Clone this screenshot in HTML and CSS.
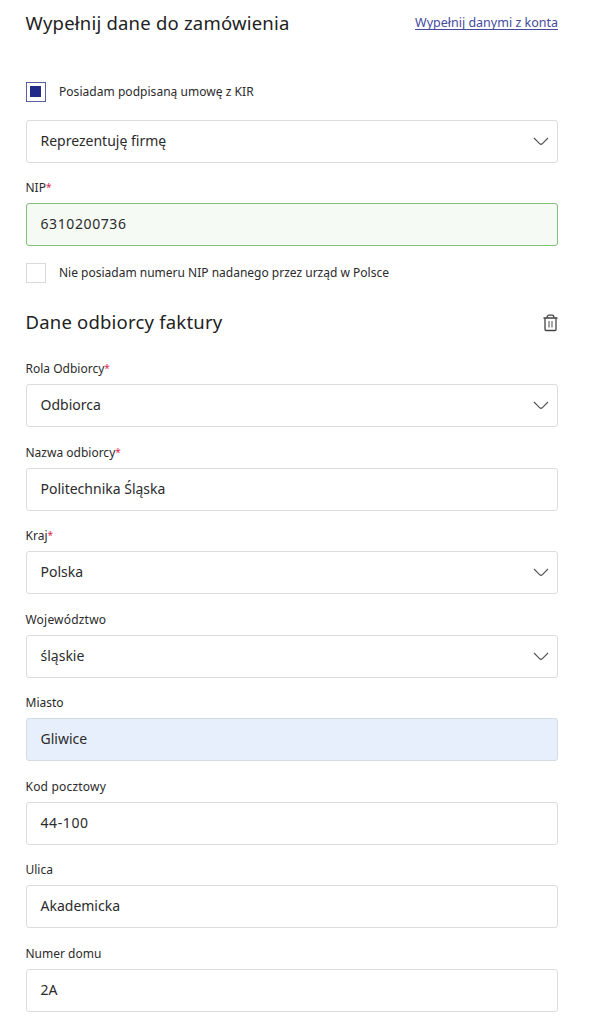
FILE: index.html
```html
<!DOCTYPE html>
<html lang="pl">
<head>
<meta charset="utf-8">
<title>Dane do zamówienia</title>
<link rel="stylesheet" href="styles.css">
</head>
<body>
<main class="form">
  <header class="form-header">
    <h1 class="title title-main">Wypełnij dane do zamówienia</h1>
    <a class="fill-link" href="#">Wypełnij danymi z konta</a>
  </header>
  <div class="check check-contract"><span class="checkbox checked"></span><span class="check-text">Posiadam podpisaną umowę z KIR</span></div>
  <div class="box"><span class="value">Reprezentuję firmę</span><svg class="chevron" viewBox="0 0 16 9"><path d="M1 1 6.8 6.8Q8 7.9 9.2 6.8L15 1"/></svg></div>
  <div class="field field-nip"><div class="label">NIP<span class="req">*</span></div><div class="box valid"><span class="value digits">6310200736</span></div></div>
  <div class="check check-nip"><span class="checkbox"></span><span class="check-text">Nie posiadam numeru NIP nadanego przez urząd w Polsce</span></div>
  <div class="section-header">
    <h2 class="title">Dane odbiorcy faktury</h2>
    <svg class="trash" viewBox="0 0 15 18"><path d="M.5 4H14.500M4 4C4 1.900 5 1.200 6 1.200H9C10 1.200 11 1.900 11 4M2 4V15.500Q2 16.500 3 16.500H12Q13 16.500 13 15.500V4"/><path class="slats" d="M6 7V13.500M9 7V13.500"/></svg>
  </div>
  <div class="fields">
    <div class="field"><div class="label">Rola Odbiorcy<span class="req">*</span></div><div class="box"><span class="value">Odbiorca</span><svg class="chevron" viewBox="0 0 16 9"><path d="M1 1 6.8 6.8Q8 7.9 9.2 6.8L15 1"/></svg></div></div>
    <div class="field"><div class="label">Nazwa odbiorcy<span class="req">*</span></div><div class="box"><span class="value">Politechnika Śląska</span></div></div>
    <div class="field"><div class="label">Kraj<span class="req">*</span></div><div class="box"><span class="value">Polska</span><svg class="chevron" viewBox="0 0 16 9"><path d="M1 1 6.8 6.8Q8 7.9 9.2 6.8L15 1"/></svg></div></div>
    <div class="field"><div class="label wide">Województwo</div><div class="box"><span class="value">śląskie</span><svg class="chevron" viewBox="0 0 16 9"><path d="M1 1 6.8 6.8Q8 7.9 9.2 6.8L15 1"/></svg></div></div>
    <div class="field"><div class="label">Miasto</div><div class="box autofill"><span class="value">Gliwice</span></div></div>
    <div class="field"><div class="label wide">Kod pocztowy</div><div class="box"><span class="value digits">44-100</span></div></div>
    <div class="field"><div class="label">Ulica</div><div class="box"><span class="value">Akademicka</span></div></div>
    <div class="field"><div class="label">Numer domu</div><div class="box"><span class="value">2A</span></div></div>
  </div>
</main>
</body>
</html>
```
FILE: styles.css
```css
* { box-sizing: border-box; }
body { margin: 0; background: #fff; color: #2b2b2b; font-family: "Noto Sans", sans-serif; }
.form { width: 592px; height: 1024px; overflow: hidden; padding: 9.9px 34px 0 26px; display: flex; flex-direction: column; }
.form-header { display: flex; justify-content: space-between; height: 72px; }
.title { margin: 0 0 0 -.5px; font-size: 18.5px; font-weight: 400; line-height: 26px; letter-spacing: .2px; color: #222; white-space: nowrap; }
.title-main { letter-spacing: .21px; }
.fill-link { font-size: 12.5px; line-height: 26px; color: #454b9c; text-underline-offset: 2px; text-decoration-skip-ink: none; white-space: nowrap; }
.check { display: flex; align-items: center; height: 20px; gap: 13px; }
.checkbox { width: 20px; height: 20px; border: 1px solid #dadada; display: grid; place-items: center; }
.checkbox.checked { border-color: #5b60a6; }
.checkbox.checked::before { content: ""; width: 11px; height: 11px; margin-right: 1px; background: #222c88; }
.check-text { font-size: 12px; line-height: 18px; white-space: nowrap; }
.check-contract .check-text { letter-spacing: .04px; }
.check-contract { margin-bottom: 18px; }
.check-nip { margin-top: 17px; }
.box { height: 43px; border: 1px solid #dcdcdc; border-radius: 3px; padding: 0 8px 1px 13.5px; display: flex; align-items: center; justify-content: space-between; background: #fff; }
.box.valid { background: #f5faf4; border-color: #83c07a; }
.box.autofill { background: #e8effc; border-color: #d5d9e0; }
.value { font-size: 14px; line-height: 20px; white-space: nowrap; }
.value.digits { letter-spacing: .6px; }
.label { height: 18px; margin: 0 0 6px -.5px; font-size: 12px; line-height: 18px; white-space: nowrap; }
.label.wide { letter-spacing: .2px; }
.req { color: #e0284f; font-size: 10px; line-height: 1; vertical-align: 1px; }
.field-nip { margin-top: 16.5px; }
.section-header { display: flex; align-items: center; justify-content: space-between; height: 26px; margin-top: 25.7px; }
.fields { display: flex; flex-direction: column; gap: 16.5px; margin-top: 25.3px; }
.chevron { width: 16px; height: 9px; margin-top: 1px; fill: none; stroke: #555; stroke-width: 1.2; }
.trash { width: 15px; height: 18px; margin-top: 1px; fill: none; stroke: #444; stroke-width: 1.3; }
.slats { stroke: #777; }
```
